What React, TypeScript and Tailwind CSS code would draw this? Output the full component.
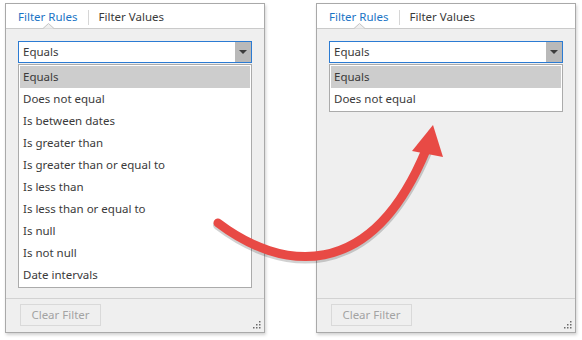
import React from 'react'

const allRules = [
  'Equals',
  'Does not equal',
  'Is between dates',
  'Is greater than',
  'Is greater than or equal to',
  'Is less than',
  'Is less than or equal to',
  'Is null',
  'Is not null',
  'Date intervals',
]

function ResizeGrip() {
  const dots = [
    [6, 0],
    [3, 3],
    [6, 3],
    [0, 6],
    [3, 6],
    [6, 6],
  ]
  return (
    <svg width="8" height="8" viewBox="0 0 8 8" className="mb-[3px] mr-[3px]">
      {dots.map(([x, y], i) => (
        <rect key={i} x={x} y={y} width="1.5" height="1.5" fill="#6b6b6b" />
      ))}
    </svg>
  )
}

function FilterPanel({ rules }: { rules: string[] }) {
  return (
    <div className="flex h-[330px] w-[260px] flex-col border border-[#a9a9a9] bg-[#efefef] shadow-[1px_2px_3px_rgba(0,0,0,0.18)]">
      {/* tabs */}
      <div className="relative flex h-[25px] items-center border-b border-[#cacaca] bg-white pl-[12px] pt-[2px] text-[11.5px]">
        <span className="text-[#1b74c5]">Filter Rules</span>
        <span className="mx-[10px] h-[15px] w-px bg-[#d6d6d6]" />
        <span className="text-[#3a3a3a]">Filter Values</span>
        <svg width="11" height="6" viewBox="0 0 11 6" className="absolute bottom-[-1px] left-[37px]">
          <polyline points="0,5.5 5.5,0.5 11,5.5" fill="#efefef" stroke="#c4c4c4" strokeWidth="1" />
        </svg>
      </div>

      {/* body */}
      <div className="flex flex-1 flex-col px-[12px] pt-[12px]">
        <div className="flex h-[22px] items-stretch border border-[#2b7bd3] bg-white">
          <span className="flex flex-1 items-center pl-[4px] text-[11.5px] text-[#3a3a3a]">Equals</span>
          <span className="flex w-[16px] items-center justify-center bg-[#b9b9b9]">
            <svg width="8" height="4" viewBox="0 0 8 4">
              <polygon points="0,0 8,0 4,4" fill="#3c3c3c" />
            </svg>
          </span>
        </div>
        <div className="mt-px border border-[#ababab] bg-white p-px">
          {rules.map((r, i) => (
            <div
              key={r}
              className={`flex h-[22px] items-center pl-[3px] text-[11.5px] text-[#3a3a3a] ${i === 0 ? 'bg-[#cdcdcd]' : ''}`}
            >
              {r}
            </div>
          ))}
        </div>
      </div>

      {/* footer */}
      <div className="flex h-[34px] items-start justify-between border-t border-[#d2d2d2]">
        <div className="ml-[14px] mt-[5px] flex h-[22px] w-[81px] items-center justify-center border border-[#d9d9d9] text-[11.5px] text-[#a3a3a3]">
          Clear Filter
        </div>
        <div className="flex h-full items-end">
          <ResizeGrip />
        </div>
      </div>
    </div>
  )
}

export default function App() {
  return (
    <div
      className="relative h-[340px] w-[582px] bg-white"
      style={{ fontFamily: '"Noto Sans", "Open Sans", sans-serif' }}
    >
      <div className="flex gap-[51px] pl-[5px] pt-[3px]">
        <FilterPanel rules={allRules} />
        <FilterPanel rules={allRules.slice(0, 2)} />
      </div>

      {/* arrow overlay */}
      <svg
        className="pointer-events-none absolute left-0 top-0"
        width="582"
        height="340"
        viewBox="0 0 582 340"
      >
        <path
          d="M218 225 C 280 272, 370 287, 427 152"
          fill="none"
          stroke="rgba(0,0,0,0.18)"
          strokeWidth="10"
          strokeLinecap="round"
        />
        <path
          d="M218 223 C 280 270, 370 285, 426 150"
          fill="none"
          stroke="#e84a45"
          strokeWidth="9"
          strokeLinecap="round"
        />
        <polygon points="433,125 412,151 443,157" fill="#e84a45" />
      </svg>
    </div>
  )
}
